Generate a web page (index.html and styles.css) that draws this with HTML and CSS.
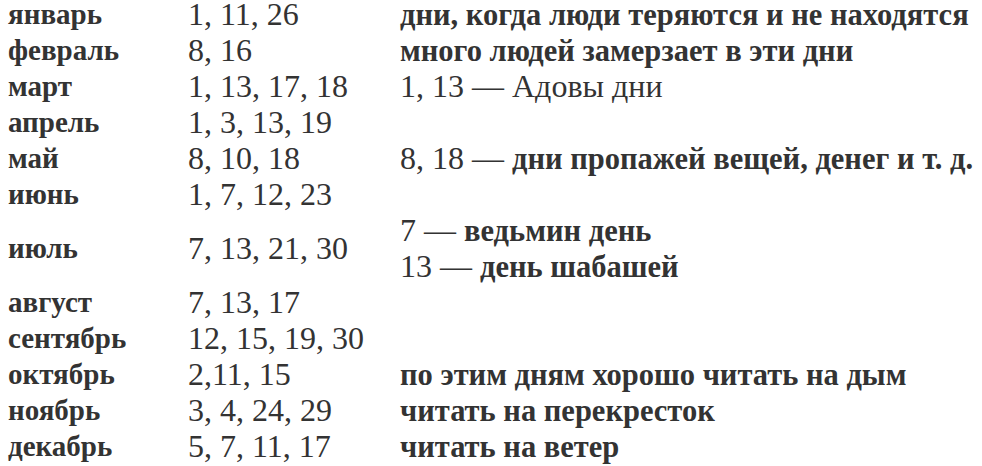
FILE: index.html
```html
<!DOCTYPE html>
<html>
<head>
<meta charset="utf-8">
<link rel="stylesheet" href="styles.css">
</head>
<body>
<div class="calendar">
  <p class="month">январь</p><p class="days">1, 11, 26</p><p class="note"><b>дни, когда люди теряются и не находятся</b></p>
  <p class="month">февраль</p><p class="days">8, 16</p><p class="note"><b>много людей замерзает в эти дни</b></p>
  <p class="month">март</p><p class="days">1, 13, 17, 18</p><p class="note">1, 13 — Адовы дни</p>
  <p class="month">апрель</p><p class="days">1, 3, 13, 19</p><p class="note"></p>
  <p class="month">май</p><p class="days">8, 10, 18</p><p class="note">8, 18 — <b>дни пропажей вещей, денег и т. д.</b></p>
  <p class="month">июнь</p><p class="days">1, 7, 12, 23</p><p class="note"></p>
  <p class="month mid">июль</p><p class="days mid">7, 13, 21, 30</p><p class="note">7 — <b>ведьмин день</b><br>13 — <b>день шабашей</b></p>
  <p class="month">август</p><p class="days">7, 13, 17</p><p class="note"></p>
  <p class="month">сентябрь</p><p class="days">12, 15, 19, 30</p><p class="note"></p>
  <p class="month">октябрь</p><p class="days">2,11, 15</p><p class="note"><b>по этим дням хорошо читать на дым</b></p>
  <p class="month">ноябрь</p><p class="days">3, 4, 24, 29</p><p class="note"><b>читать на перекресток</b></p>
  <p class="month">декабрь</p><p class="days">5, 7, 11, 17</p><p class="note"><b>читать на ветер</b></p>
</div>
</body>
</html>
```
FILE: styles.css
```css
body {
  margin: 0;
  padding: 0;
  background: #ffffff;
}
.calendar {
  display: grid;
  grid-template-columns: 180px 212px 1fr;
  align-items: start;
  margin: -4px 0 0 8px;
  font-family: "Liberation Serif", "Times New Roman", serif;
  font-size: 32px;
  line-height: 36px;
  color: #333333;
}
.month, .days, .note {
  margin: 0;
  min-height: 36px;
  white-space: nowrap;
}
.month {
  font-size: 29px;
  font-weight: bold;
}
.note b {
  font-size: 30.5px;
  font-weight: bold;
  line-height: 0;
}
.mid {
  align-self: center;
}
```
